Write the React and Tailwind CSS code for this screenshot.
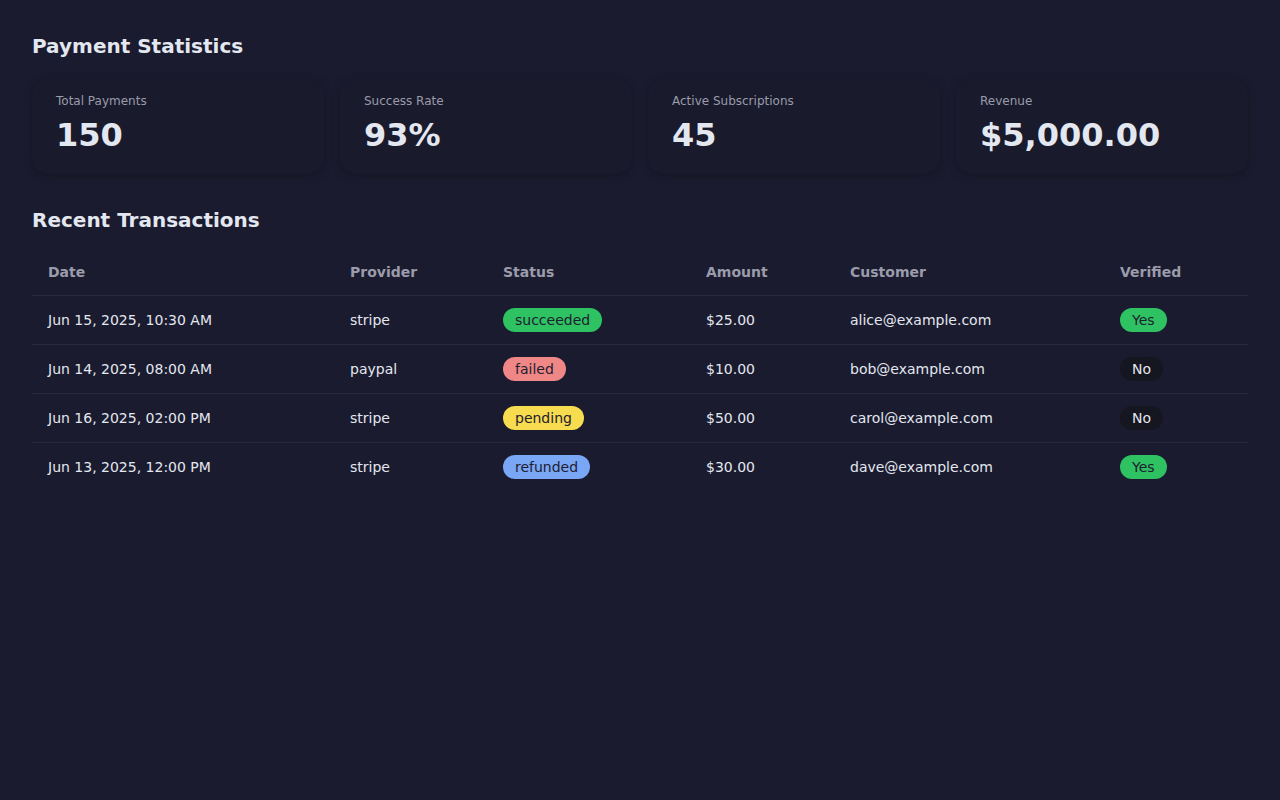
import React from 'react';

const stats = [
  { label: 'Total Payments', value: '150' },
  { label: 'Success Rate', value: '93%' },
  { label: 'Active Subscriptions', value: '45' },
  { label: 'Revenue', value: '$5,000.00' },
];

const rows = [
  { date: 'Jun 15, 2025, 10:30 AM', provider: 'stripe', status: 'succeeded', amount: '$25.00', customer: 'alice@example.com', verified: true },
  { date: 'Jun 14, 2025, 08:00 AM', provider: 'paypal', status: 'failed', amount: '$10.00', customer: 'bob@example.com', verified: false },
  { date: 'Jun 16, 2025, 02:00 PM', provider: 'stripe', status: 'pending', amount: '$50.00', customer: 'carol@example.com', verified: false },
  { date: 'Jun 13, 2025, 12:00 PM', provider: 'stripe', status: 'refunded', amount: '$30.00', customer: 'dave@example.com', verified: true },
];

const statusClass = {
  succeeded: 'bg-[#2fc263]',
  failed: 'bg-[#f08787]',
  pending: 'bg-[#f7dc4f]',
  refunded: 'bg-[#79a6f5]',
};

const StatCard = ({ label, value }) => (
  <div className="rounded-2xl bg-[#191a2c] px-6 pt-[15px] pb-[19px] shadow-[0_2px_8px_rgba(0,0,0,0.25)]">
    <div className="text-xs text-[#9a9bab]">{label}</div>
    <div className="mt-[6px] text-[32px] leading-10 font-bold text-[#e3e7f0]">{value}</div>
  </div>
);

export default function App() {
  return (
    <div className="min-h-[800px] bg-[#1a1b2e] p-8 text-[#e3e7f0]" style={{ fontFamily: '"DejaVu Sans", sans-serif' }}>
      <h2 className="text-xl font-bold leading-7 text-[#e3e7f0]">Payment Statistics</h2>
      <div className="mt-[18px] grid grid-cols-4 gap-4">
        {stats.map((s) => (
          <StatCard key={s.label} {...s} />
        ))}
      </div>

      <h2 className="mt-8 text-xl font-bold leading-7 text-[#e3e7f0]">Recent Transactions</h2>
      <table className="mt-4 w-full border-collapse text-sm">
        <thead>
          <tr className="border-b border-[#272839] text-left text-[#9a9bab]">
            <th className="w-[302px] px-4 pt-3 pb-[13px] font-bold">Date</th>
            <th className="w-[153px] px-4 pt-3 pb-[13px] font-bold">Provider</th>
            <th className="w-[203px] px-4 pt-3 pb-[13px] font-bold">Status</th>
            <th className="w-[144px] px-4 pt-3 pb-[13px] font-bold">Amount</th>
            <th className="w-[270px] px-4 pt-3 pb-[13px] font-bold">Customer</th>
            <th className="px-4 pt-3 pb-[13px] font-bold">Verified</th>
          </tr>
        </thead>
        <tbody>
          {rows.map((r, i) => (
            <tr key={r.customer} className={i < rows.length - 1 ? 'border-b border-[#272839]' : ''}>
              <td className="h-[49px] px-4">{r.date}</td>
              <td className="px-4">{r.provider}</td>
              <td className="px-4">
                <span className={`inline-block rounded-full px-3 py-[2px] text-[#1e2030] ${statusClass[r.status]}`}>{r.status}</span>
              </td>
              <td className="px-4">{r.amount}</td>
              <td className="px-4">{r.customer}</td>
              <td className="px-4">
                {r.verified ? (
                  <span className="inline-block rounded-full bg-[#2fc263] px-3 py-[2px] text-[#1e2030]">Yes</span>
                ) : (
                  <span className="inline-block rounded-full bg-[#15161f] px-3 py-[2px] text-[#e3e7f0]">No</span>
                )}
              </td>
            </tr>
          ))}
        </tbody>
      </table>
    </div>
  );
}
